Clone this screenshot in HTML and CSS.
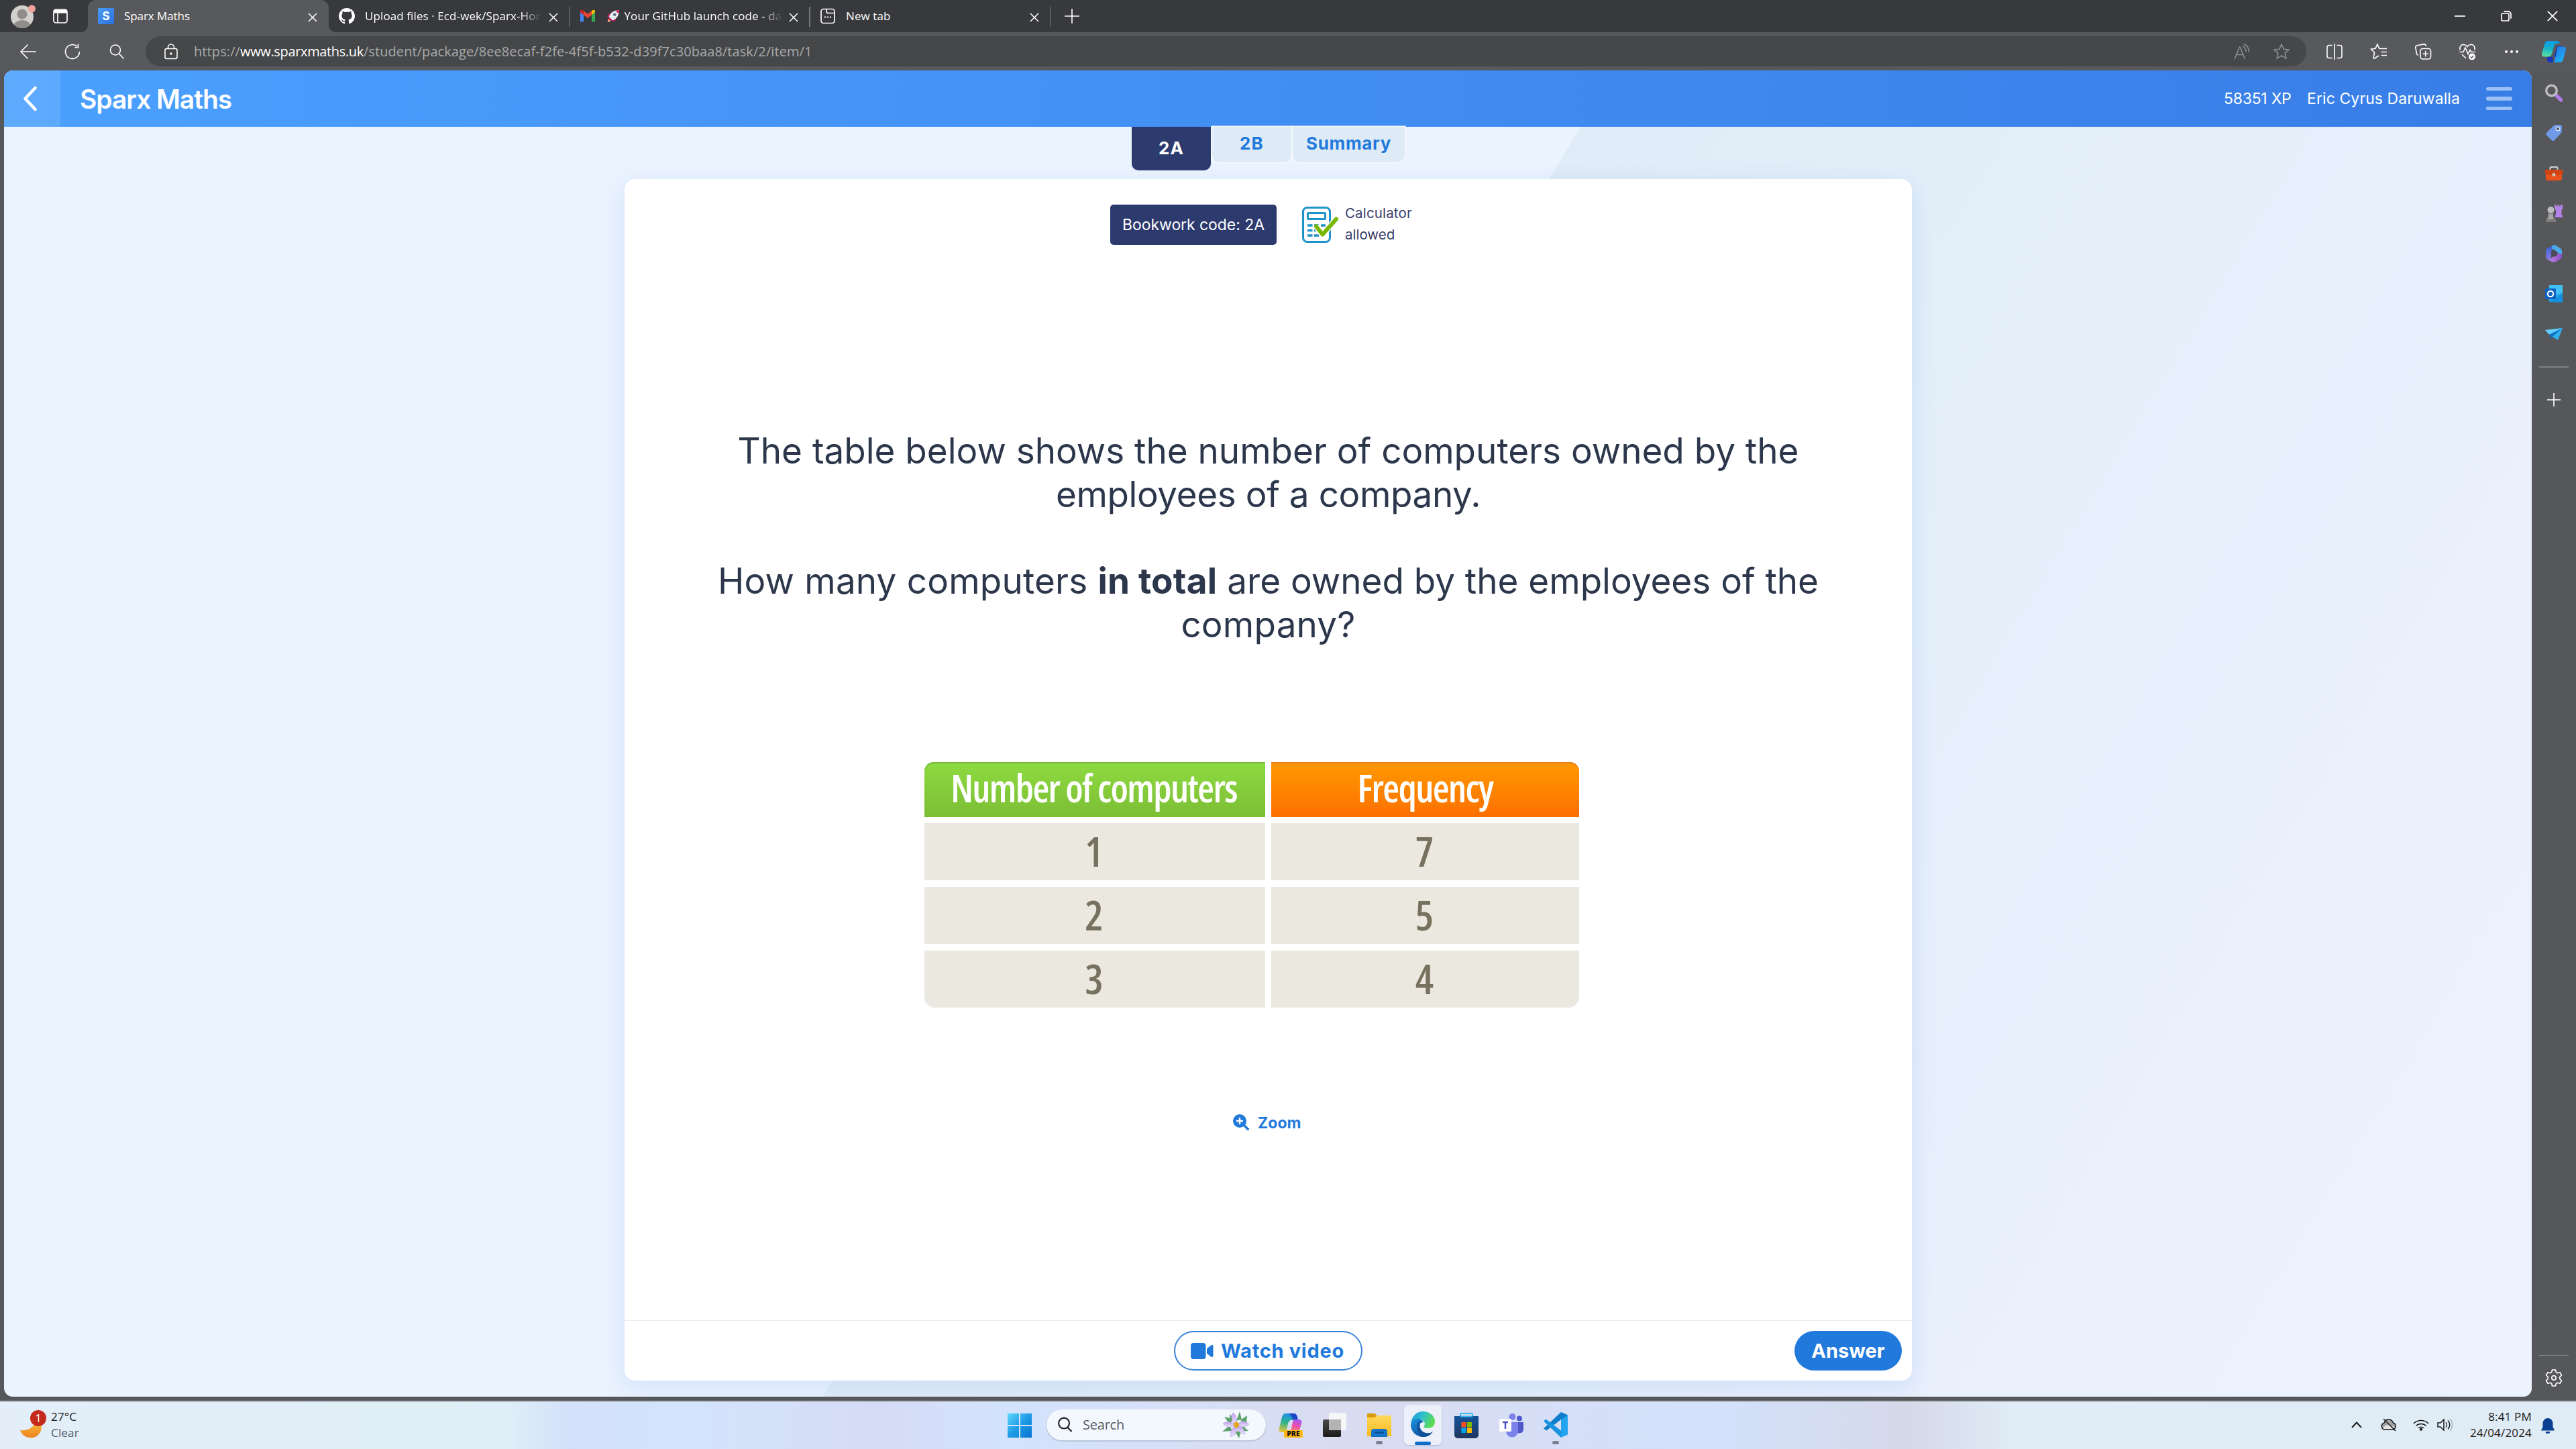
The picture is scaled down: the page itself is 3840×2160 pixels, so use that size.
FILE: index.html
```html
<!DOCTYPE html>
<html lang="en">
<head>
<meta charset="utf-8">
<title>Sparx Maths</title>
<link rel="stylesheet" href="styles.css">
</head>
<body>
<svg class="defs" width="0" height="0" aria-hidden="true">
  <defs>
    <linearGradient id="gWin" x1="0" y1="0" x2="1" y2="1"><stop offset="0" stop-color="#5fd6fb"/><stop offset=".5" stop-color="#1e9be6"/><stop offset="1" stop-color="#0673cf"/></linearGradient>
    <linearGradient id="gTeal" x1="0.6" y1="0" x2="0.4" y2="1"><stop offset="0" stop-color="#0a9be8"/><stop offset=".5" stop-color="#17b2c9"/><stop offset="1" stop-color="#57dfa4"/></linearGradient>
    <linearGradient id="gBlue" x1="0" y1="0" x2="0.6" y2="1"><stop offset="0" stop-color="#2a6fe0"/><stop offset="1" stop-color="#1cb0f5"/></linearGradient>
    <linearGradient id="gCopL" x1="0.5" y1="0" x2="0.3" y2="1"><stop offset="0" stop-color="#1c8ef0"/><stop offset=".5" stop-color="#2eb387"/><stop offset="1" stop-color="#e6c63a"/></linearGradient>
    <linearGradient id="gCopR" x1="0.6" y1="0" x2="0.3" y2="1"><stop offset="0" stop-color="#a558ee"/><stop offset=".5" stop-color="#ef4fae"/><stop offset="1" stop-color="#fb9363"/></linearGradient>
    <linearGradient id="gFolder" x1="0" y1="0" x2="0" y2="1"><stop offset="0" stop-color="#ffd95e"/><stop offset="1" stop-color="#f7b91f"/></linearGradient>
    <linearGradient id="gEdgeTop" x1="0" y1="0" x2="1" y2=".4"><stop offset="0" stop-color="#1c93d8"/><stop offset=".5" stop-color="#2cc0d0"/><stop offset="1" stop-color="#5ddc55"/></linearGradient>
    <linearGradient id="gEdgeLow" x1="0" y1="0" x2=".7" y2="1"><stop offset="0" stop-color="#1b93e0"/><stop offset="1" stop-color="#0d4f9f"/></linearGradient>
    <linearGradient id="gStore" x1="0" y1="0" x2="0" y2="1"><stop offset="0" stop-color="#14539b"/><stop offset="1" stop-color="#20375f"/></linearGradient>
    <linearGradient id="gMoon" x1="0" y1="0" x2="0" y2="1"><stop offset="0" stop-color="#fbc63e"/><stop offset="1" stop-color="#ec8222"/></linearGradient>
    <linearGradient id="gPetal" x1="0" y1="0" x2="0" y2="1"><stop offset="0" stop-color="#bda4ec"/><stop offset="1" stop-color="#ebe2fb"/></linearGradient>
    <linearGradient id="gDark" x1="0" y1="0" x2="0" y2="1"><stop offset="0" stop-color="#4a4a4a"/><stop offset="1" stop-color="#1c1c1c"/></linearGradient>
    <linearGradient id="gFav" x1="0" y1="0" x2="1" y2="1"><stop offset="0" stop-color="#4b9dfb"/><stop offset="1" stop-color="#2b6fdc"/></linearGradient>
    <linearGradient id="gM1" x1="0" y1="0" x2="0" y2="1"><stop offset="0" stop-color="#2f63cf"/><stop offset="1" stop-color="#8b7ae6"/></linearGradient>
    <linearGradient id="gM2" x1="0" y1="0" x2="1" y2="0"><stop offset="0" stop-color="#c38be8"/><stop offset="1" stop-color="#8a4cc0"/></linearGradient>
  </defs>
</svg>

<header class="tabstrip">
  <svg class="avatar" viewBox="0 0 38 38"><defs><clipPath id="cAv"><circle cx="17" cy="20" r="17"/></clipPath></defs><circle cx="17" cy="20" r="17" fill="#d3d1ce"/><g clip-path="url(#cAv)" fill="#908d8a"><circle cx="17" cy="16" r="7.5"/><ellipse cx="17" cy="35" rx="13" ry="10"/></g><circle cx="31.500" cy="8" r="5.500" fill="#f3a19b"/></svg>
  <svg class="workspaces" viewBox="0 0 22 22" fill="none" stroke="#fff" stroke-width="1.700"><rect x="1" y="1" width="20" height="20" rx="3.500"/><path d="M1.500 4.200h19" stroke-width="5"/><path d="M7 5v16"/></svg>

  <div class="tab tab-active">
    <svg class="fav" viewBox="0 0 24 24"><rect width="24" height="24" rx="1" fill="url(#gFav)"/><text x="12" y="18" text-anchor="middle" font-family="Inter, sans-serif" font-weight="700" font-size="17" fill="#fff">S</text></svg>
    <span class="tab-title t-sparx">Sparx Maths</span>
    <svg class="x" viewBox="0 0 14 14"><path d="M1 1l12 12M13 1L1 13"/></svg>
  </div>
  <div class="tab">
    <svg class="fav" viewBox="0 0 16 16"><path fill="#fff" fill-rule="evenodd" d="M8 0C3.580 0 0 3.580 0 8c0 3.540 2.290 6.530 5.470 7.590.4.070.55-.17.55-.38 0-.19-.01-.82-.01-1.490-2.010.37-2.530-.49-2.690-.94-.09-.23-.48-.94-.82-1.130-.28-.15-.68-.52-.01-.53.63-.01 1.080.58 1.230.82.72 1.210 1.870.87 2.330.66.07-.52.28-.87.51-1.070-1.780-.2-3.640-.89-3.640-3.950 0-.87.31-1.590.82-2.150-.08-.2-.36-1.020.08-2.120 0 0 .67-.21 2.200.82.64-.18 1.320-.27 2-.27s1.360.09 2 .27c1.530-1.040 2.200-.82 2.200-.82.44 1.100.16 1.920.08 2.120.51.56.82 1.270.82 2.150 0 3.070-1.870 3.750-3.650 3.950.29.25.54.73.54 1.480 0 1.070-.01 1.930-.01 2.200 0 .21.15.46.55.38A8.010 8.010 0 0 0 16 8c0-4.420-3.580-8-8-8z"/></svg>
    <span class="tab-title fade">Upload files · Ecd-wek/Sparx-Hor</span>
    <svg class="x" viewBox="0 0 14 14"><path d="M1 1l12 12M13 1L1 13"/></svg>
  </div>
  <div class="tab sep">
    <svg class="fav" viewBox="0 0 24 24"><path d="M1 20.500V5.500l5 3.700v11.300z" fill="#4285f4"/><path d="M23 20.500V5.500l-5 3.700v11.300z" fill="#34a853"/><path d="M1 6.500V5c0-2 2.300-3 3.800-1.700L12 8.800l7.200-5.500V9.500L12 15 1 6.500z" fill="#ea4335"/><path d="M18 9.900V4.200l1.200-.9C20.700 2.100 23 3 23 5v1.200z" fill="#fbbc04"/><path d="M1 6.200V5c0-1.800 1.800-2.800 3.500-1.900L6 4.200v5.700z" fill="#c5221f"/></svg>
    <svg class="rocket" viewBox="0 0 22 22"><path d="M5 11l-4 1 3-5 5-1zM11 17l-1 4 5-3 1-5z" fill="#c2185b"/><path d="M4 13c1-6 7-12 17-12 0 10-6 16-12 17z" fill="#e7edf2"/><path d="M15 2.500c2-1 4-1.500 6-1.500 0 2-.5 4-1.500 6z" fill="#d81b60"/><circle cx="13.500" cy="8.500" r="2.500" fill="#5a7184"/><path d="M5 14l3 3c-1 2-3 4-6 4 0-3 1-6 3-7z" fill="#f5a76a"/><path d="M4 12l6 6-3 1-4-4z" fill="#c2185b"/></svg>
    <span class="tab-title fade">Your GitHub launch code - da</span>
    <svg class="x" viewBox="0 0 14 14"><path d="M1 1l12 12M13 1L1 13"/></svg>
  </div>
  <div class="tab sep">
    <svg class="fav newtab" viewBox="0 0 24 24" fill="none" stroke="#fff" stroke-width="1.700"><rect x="2" y="1.500" width="20" height="21" rx="3.500"/><path d="M10 1.500v3.500a2.500 2.500 0 0 0 2.500 2.500H22"/><path d="M7 13.500h2M11 13.500h2M15 13.500h2" stroke-width="2.200"/></svg>
    <span class="tab-title">New tab</span>
    <svg class="x" viewBox="0 0 14 14"><path d="M1 1l12 12M13 1L1 13"/></svg>
  </div>
  <div class="newbtn sep"><svg viewBox="0 0 22 22" fill="none" stroke="#fff" stroke-width="1.600"><path d="M11 0v22M0 11h22"/></svg></div>
  <div class="winbtns">
    <svg viewBox="0 0 16 16"><path d="M0 8h16"/></svg>
    <svg viewBox="0 0 16 16"><rect x="1" y="4" width="11" height="11" rx="2"/><path d="M4.500 1.200h6.500a4 4 0 0 1 4 4v6.500"/></svg>
    <svg viewBox="0 0 16 16"><path d="M.8.8l14.400 14.400M15.200.8L.8 15.200"/></svg>
  </div>
</header>

<div class="toolbar">
  <nav class="navbtns">
    <svg viewBox="0 0 24 24"><path d="M24 12H1M11.500 1.500L1 12l10.500 10.500"/></svg>
    <svg viewBox="0 0 24 24"><path d="M22.500 12a10.500 10.500 0 1 1-3.300-7.600M20.500.5v5.500h-5.500"/></svg>
    <svg viewBox="0 0 24 24"><circle cx="10" cy="9.500" r="7.500"/><path d="M15.500 15l7 7.500"/></svg>
  </nav>
  <div class="omnibox">
    <svg class="lock" viewBox="0 0 20 24"><rect x="1" y="7.500" width="18" height="15" rx="2.500"/><path d="M5.500 7.500V5.500a4.500 4.500 0 0 1 9 0v2"/><circle cx="10" cy="15" r="1" fill="#fff"/></svg>
    <div class="url"><span class="u1">https://</span><b>www.sparxmaths.uk</b><span class="u3">/student/package/8ee8ecaf-f2fe-4f5f-b532-d39f7c30baa8/task/2/item/1</span></div>
    <svg class="obtn" viewBox="0 0 24 24"><path d="M1 23L8.500 5h.5l7.500 18M4 16.500h9.500M13 4a7.500 7.500 0 0 1 5 8M14.500 0.500A12 12 0 0 1 22.500 13"/></svg>
    <svg class="obtn" viewBox="0 0 24 24"><path d="M12 1.200l3.200 7.100 7.700.8-5.700 5.200 1.600 7.600L12 18l-6.800 3.900 1.600-7.600L1.100 9.100l7.700-.8z"/></svg>
  </div>
  <div class="tools">
    <div><svg viewBox="0 0 24 24"><path d="M12 0v24M8.500 2.500H4a3 3 0 0 0-3 3v13a3 3 0 0 0 3 3h4.500M15.500 2.500H20a3 3 0 0 1 3 3v13a3 3 0 0 1-3 3h-4.500"/></svg></div>
    <div><svg viewBox="0 0 24 24"><path d="M15.500 7.800L12.500 7 9.900.9 7 7.300.6 8.300l4.900 5-1.300 7.900c0 1 .8 1.300 1.600.8L12 18M15.500 7.500H24M15.500 12.500H24M15.500 17.500H24"/></svg></div>
    <div><svg viewBox="0 0 24 24"><rect x="8" y="7.500" width="15.500" height="15.500" rx="3.500"/><path d="M15.700 11v8.500M11.500 15.200H20M5 17.500a3 3 0 0 1-2.500-2.500L.8 6a3 3 0 0 1 2.400-3.300L13 .9a3 3 0 0 1 3.300 2.500V4"/></svg></div>
    <div><svg viewBox="0 0 24 24"><path d="M1 9.500C0 3.500 4 1 7 1.500c2.500.3 4 1.500 5 3 1-1.500 2.500-2.700 5-3 3-.5 7 2 6 8M.5 12.500h5.500l3-6.500 4 9.500 3-6 1.700 3H24M4 16l6 6"/><circle cx="19" cy="19.500" r="5" fill="#fff" stroke="none"/><path d="M16.700 19.500l1.700 1.700 3-3.200" stroke="#58595d"/></svg></div>
    <div><svg viewBox="0 0 24 24"><g fill="#fff" stroke="none"><circle cx="4" cy="12" r="2"/><circle cx="12" cy="12" r="2"/><circle cx="20" cy="12" r="2"/></g></svg></div>
  </div>
  <svg class="copilot" viewBox="0 0 36 32"><path d="M18 24h8l5-16h-8z" fill="#1636b8"/><path d="M10 32h10c-4 0-4-5-3-8H8c0 4 0 8 4 8z" fill="#1636c0"/><path d="M9 0h13c3 0 4 2 5 4h-5c-2 0-3 1-3.500 3L15 19c-1 3-3 4.500-6 4.500H3.500C.5 23.500-.5 21 .3 18L4 5c1-3 2-5 5-5z" fill="url(#gTeal)"/><path d="M24.500 8.500H32c3 0 4.500 2 3.700 5L32 27c-1 3-2 5-5 5H16c2 0 3-2 3.500-4L23 12c.3-1.500.5-3.500 1.500-3.500z" fill="url(#gBlue)"/></svg>
</div>

<div class="window">
  <main class="page">
    <div class="appbar">
      <a class="back"><svg viewBox="0 0 24 40"><path d="M19.500 4L4.500 20l15 16"/></svg></a>
      <span class="brand">Sparx Maths</span>
      <span class="xp">58351 XP</span>
      <span class="user">Eric Cyrus Daruwalla</span>
      <span class="burger"><i></i><i></i><i></i></span>
    </div>
    <div class="content">
      <nav class="items">
        <a class="item on">2A</a>
        <a class="item">2B</a>
        <a class="item wide">Summary</a>
      </nav>
      <section class="card">
        <div class="meta">
          <span class="bookwork">Bookwork code: 2A</span>
          <svg class="calc" viewBox="0 0 54 54" fill="none" stroke="#1f94c9"><rect x="1.500" y="1.500" width="40" height="51" rx="6" stroke-width="3"/><rect x="8.500" y="9.500" width="26" height="9" rx="1" stroke-width="3"/><path d="M8 28h7.500M18 28h7M28 28h7M8 35.500h7.500M18 35.500h5M8 43h7.500M18 43h7" stroke-width="3.600"/><path d="M21 29.500l9.500 12.500L51 18.500" stroke="#fff" stroke-width="9"/><path d="M21 29.500l9.500 12L51 18.500" stroke="#78b800" stroke-width="6" stroke-linecap="round" stroke-linejoin="round"/></svg>
          <span class="calc-label"><span>Calculator</span><span class="al">allowed</span></span>
        </div>
        <div class="question">
          <p><span>The table below shows the number of computers owned by the</span><br><span class="q2">employees of a company.</span></p>
          <p><span class="q3">How many computers <b>in total</b> <span class="q4">are owned by the employees of the</span></span><br><span class="q5">company?</span></p>
        </div>
        <div class="table">
          <div class="th green">Number of computers</div><div class="th orange">Frequency</div>
          <div class="td">1</div><div class="td">7</div>
          <div class="td">2</div><div class="td">5</div>
          <div class="td bl">3</div><div class="td br">4</div>
        </div>
        <a class="zoom"><svg viewBox="0 0 25 25"><circle cx="10" cy="10" r="10" fill="#2279dc"/><path d="M16 16l7.300 7.300" stroke="#2279dc" stroke-width="3.400"/><path d="M10 5v10M5 10h10" stroke="#fff" stroke-width="2.400"/></svg><span>Zoom</span></a>
        <footer class="actions">
          <span class="side"></span>
          <a class="watch"><svg viewBox="0 0 34 24"><rect width="22.500" height="24" rx="4" fill="#2279dc"/><path d="M24 8.500l6-5c1.500-1 3.500-.5 3.500 1.500v14c0 2-2 2.500-3.500 1.500l-6-5z" fill="#2279dc"/></svg><span>Watch video</span></a>
          <span class="side end"><a class="answer">Answer</a></span>
        </footer>
      </section>
    </div>
  </main>

  <aside class="sidebar">
    <div class="slot"><svg viewBox="0 0 26 26"><path d="M16.500 17l7 7" stroke="#b27be8" stroke-width="5.500" stroke-linecap="round"/><circle cx="9.500" cy="10" r="7.800" fill="none" stroke="#bdbdbd" stroke-width="3.400"/></svg></div>
    <div class="slot"><svg viewBox="0 0 26 26"><path d="M13.500 1.500L22 1c2 0 3 1 3 3l-.5 8.500L14 24c-1.500 1.500-3 1.500-4.500 0l-7-7c-1.500-1.500-1.500-3 0-4.500z" fill="#6f9ae8"/><circle cx="19" cy="7" r="2.800" fill="#3e4a66" stroke="#dfe8fb" stroke-width="1.400"/></svg></div>
    <div class="slot"><svg viewBox="0 0 26 26"><path d="M7.500 8V5.500a1.500 1.500 0 0 1 1.500-1.500h8a1.500 1.500 0 0 1 1.500 1.500V8" fill="none" stroke="#d0d0d0" stroke-width="2"/><path d="M1 12h24v10c0 1-1 2-2 2H3c-1 0-2-1-2-2z" fill="#e8521a"/><path d="M0 8h26v6.500c-8 2-18 2-26 0z" fill="#d24312"/><circle cx="13" cy="15.500" r="2.400" fill="#c9c9c9"/></svg></div>
    <div class="slot"><svg viewBox="0 0 26 26"><path d="M14 0h2.500v2.500h2V0h2.500v2.500h2V0H26v6l-1.500 2v7l1.500 2v2H14.500v-2L16 15V8l-2-2z" fill="#b583ea"/><circle cx="8.500" cy="8" r="5" fill="#bdbdbd"/><path d="M4 13.500h9l-1.500 2 1.500 6h2.500V26H1v-4.500h2.500l1.500-6z" fill="#a4a4a4"/><path d="M1 22h14.500v3c0 .6-.4 1-1 1H2c-.6 0-1-.4-1-1z" fill="#7d7a78"/></svg></div>
    <div class="slot"><svg viewBox="0 0 26 26"><path d="M13 0L3 5.500C1.500 6.500 1 7.500 1 9v8.500c0 2 .8 3 2 3.700l3 1.800c2-.5 3-2 3-4.500V10c0-2 1-3 2.500-4z" fill="url(#gM1)"/><path d="M13 0c-3 1.500-4 4-2 6.500L23 14.500l2 4V9c0-1.500-.5-2.500-2-3.500L15.500.8C14.600.2 14 0 13 0z" fill="#4aa9ec"/><path d="M25 14v4c0 1.300-.5 2.300-2 3.200l-7.500 4.300c-1.600.8-3.400.8-5 0L4 22c6 .5 6-4 9-5.500l6-4z" fill="url(#gM2)"/><path d="M9 9.500l4-2.500 5 3.500v5L13 18l-4-2.500z" fill="#4a4a56"/></svg></div>
    <div class="slot"><svg viewBox="0 0 26 26"><rect x="6" y="0" width="20" height="25" rx="1.500" fill="#28a8ea"/><path d="M6 0h20v12L6 15z" fill="#41c0f2"/><path d="M6 25L26 12v12c0 1-.6 2-1.600 2z" fill="#1490df"/><rect x="0" y="5" width="16" height="16" rx="1.500" fill="#0a63c4"/><circle cx="8" cy="13" r="4.200" fill="none" stroke="#fff" stroke-width="2.200"/></svg></div>
    <div class="slot"><svg viewBox="0 0 26 26"><path d="M0 7L26 4 19 22l-8-5z" fill="#2fb2ee"/><path d="M0 7L26 4 6.500 14z" fill="#64d0fb"/><path d="M6.500 13.500L26 4 11 16.500 8.500 20.500z" fill="#0f6ebf"/></svg></div>
    <hr>
    <svg class="plus" viewBox="0 0 20 20"><path d="M10 0v20M0 10h20"/></svg>
    <hr class="low">
    <svg class="gear" viewBox="0 0 26 26"><path d="M10.500 1h5l.8 3.600 2.200 1.200 3.500-1.100 2.500 4.300-2.700 2.600v2.800l2.700 2.600-2.500 4.300-3.500-1.100-2.200 1.200-.8 3.600h-5l-.8-3.600-2.200-1.200L4 21.300 1.500 17l2.700-2.600v-2.800L1.500 9 4 4.700l3.500 1.100 2.200-1.200z"/><circle cx="13" cy="13" r="3.200"/></svg>
  </aside>
</div>

<footer class="taskbar">
  <div class="weather">
    <svg viewBox="0 0 44 46"><path d="M1 31c7 1 14-1 19-6 3-3 5-7 6-11 9 6 9 18 1 25-8 6-22 4-26-8z" fill="url(#gMoon)"/><circle cx="28" cy="13" r="12" fill="#c42b1c"/><text x="28" y="18.500" text-anchor="middle" font-family="'Open Sans', sans-serif" font-size="16" font-weight="500" fill="#fff">1</text></svg>
    <div class="two"><span>27°C</span><span class="dim">Clear</span></div>
  </div>
  <div class="apps">
    <svg class="a-win" viewBox="0 0 36 36"><path d="M0 0h17v17H0zM19 0h17v17H19zM0 19h17v17H0zM19 19h17v17H19z" fill="url(#gWin)"/></svg>
    <div class="search">
      <svg class="mag" viewBox="0 0 24 24"><circle cx="10.500" cy="10" r="8.300"/><path d="M16 16.500l6.500 6.500"/></svg>
      <span>Search</span>
      <svg class="flower" viewBox="0 0 42 40"><g fill="#5fa36c"><path d="M27 0l3 12-8 2zM4 8l13 3-5 8zM38 6l-1 13-9-6zM1 30l11-9 4 8zM40 29l-12 1 3-9zM26 40l-6-10 9-1zM12 4l9 8-8 4z"/></g><g fill="url(#gPetal)" stroke="#a68ede" stroke-width=".5"><path d="M17 2c6 4 7 12 4 17-6-3-8-11-4-17z"/><path d="M41 19c-5 5-13 5-18 1 4-6 12-7 18-1z"/><path d="M35 34c-7 0-12-6-12-12 7-1 12 5 12 12z"/><path d="M14 38c-2-7 1-14 7-17 4 6 1 14-7 17z"/><path d="M2 18c6-4 14-3 18 2-5 5-13 4-18-2z"/></g><circle cx="22" cy="20" r="4.300" fill="#e2a51f"/></svg>
    </div>
    <svg class="a-cop" viewBox="0 0 36 36"><path d="M11 0h11c3 0 4 2 5 5l1 5h-9c-3 0-4 2-5 5l-2 9c-1 3-2 4-5 4H4c-3 0-4-3-3-6L5 5c1-3 3-5 6-5z" fill="url(#gCopL)"/><path d="M15 0h8c3 0 4 2 5 5l1 5h-6c-3-1-3-7-8-10z" fill="#1b45c8"/><path d="M24 9h6c4 0 5 3 4 6l-4 13H15c2-1 3-3 4-6l2-9c.6-2 1-4 3-4z" fill="url(#gCopR)"/><rect x="8" y="25" width="28" height="11" rx="2" fill="#fdb913"/><text x="22" y="34.300" text-anchor="middle" font-family="'Open Sans', sans-serif" font-weight="800" font-size="10.500" fill="#111">PRE</text></svg>
    <svg class="a-task" viewBox="0 0 35 36"><rect x="0" y="10" width="27" height="26" rx="2" fill="url(#gDark)"/><rect x="9" y="0" width="26" height="26" rx="2" fill="#f7f7f7" opacity=".92"/><path d="M9 10h18v16H9z" fill="#b4b4b4"/></svg>
    <div class="app"><svg viewBox="0 0 36 36"><path d="M0 2.500C0 1.600.6 1 1.500 1h10l3 3.500-3 4H0z" fill="#d99a0b"/><path d="M0 7h11l4-3h19.500c1 0 1.500.6 1.500 1.500V35H0z" fill="url(#gFolder)"/><path d="M6 36V28a4 4 0 0 1 4-4h16a4 4 0 0 1 4 4v8z" fill="#1273c8"/><path d="M11 29.500h14" stroke="#0a4b91" stroke-width="2"/></svg><i></i></div>
    <div class="app cur"><svg viewBox="0 0 36 38"><path d="M0 19C1 7 9 0 18 0c11 0 18 7 18 15 0 7-5 10-11 10-4 0-6-1-5.500-2.500 3-4 1-9-4-10.500C8 9.500 1 12 0 19z" fill="url(#gEdgeTop)"/><path d="M0 20c0-6 5-9.500 10-9.500 5 0 8.500 3 9 6-4-1-6 2-5.500 6 .7 6 6 10 12 10 3 0 5-.7 7.500-2.500C30 35 24.500 38 18.500 38 8 38 0 30 0 20z" fill="url(#gEdgeLow)"/><path d="M9 22c1-8 7-9 9-7-4 0-5 4-4.500 8 1 6 6 9.500 12 9.500 3 0 5-.7 7.500-2.500-4 6-9 8-14 8C12 37 8 30 9 22z" fill="#0e4d94" opacity=".75"/></svg><i></i></div>
    <svg class="a-store" viewBox="0 0 36 38"><path d="M9 7V3a2 2 0 0 1 2-2h14a2 2 0 0 1 2 2v4" fill="none" stroke="#35b6ee" stroke-width="2"/><path d="M0 5h36v28a5 5 0 0 1-5 5H5a5 5 0 0 1-5-5z" fill="url(#gStore)"/><path d="M9 5.500h18" stroke="#35b6ee" stroke-width="2"/><path d="M10.500 14h7v7.500h-7z" fill="#f25022"/><path d="M19 14h7v7.500h-7z" fill="#7fba00"/><path d="M10.500 22.500h7V30h-7z" fill="#00a4ef"/><path d="M19 22.500h7V30h-7z" fill="#ffb900"/></svg>
    <svg class="a-teams" viewBox="0 0 36 36"><circle cx="30" cy="7.500" r="4" fill="#5059c9"/><circle cx="19.500" cy="5" r="5" fill="#7b83eb"/><path d="M26 13h10v11a6 6 0 0 1-10 4z" fill="#5059c9"/><path d="M10 13h18v13a9 9 0 0 1-18 1z" fill="#7b83eb"/><rect x="0" y="8" width="18" height="19" rx="1.500" fill="#fff"/><path d="M5 13h8M9 13v10" stroke="#4b53bc" stroke-width="2.400"/></svg>
    <div class="app"><svg viewBox="0 0 36 38"><path d="M26 0l10 4.500v29L26 38z" fill="#24a4ee"/><path d="M26 0L36 4.500 4 27.500 0 24.500z" fill="#0f7fcb"/><path d="M0 13.500L3.500 10.500 26 27.500V38z" fill="#1b94e0"/><path d="M26 11v16L16 19z" fill="#d9dff3"/></svg><i></i></div>
  </div>
  <div class="tray">
    <svg class="chev" viewBox="0 0 16 10"><path d="M1 9l7-7.500L15 9"/></svg>
    <svg class="cloud" viewBox="0 0 24 20"><path d="M6 17a5 5 0 0 1-1-9.800A7 7 0 0 1 18.500 7 5.200 5.200 0 0 1 18 17z" fill="#a4a4a4" stroke="none"/><path d="M3 16c3-6 8-7 12-4l5 1 1 3-3 1H6z" fill="#e4e4e4" stroke="none"/><path d="M6 17a5 5 0 0 1-1-9.800A7 7 0 0 1 18.500 7 5.200 5.200 0 0 1 18 17zM4 1l18 18"/></svg>
    <svg class="wifi" viewBox="0 0 24 18"><path d="M.8 7a16 16 0 0 1 22.400 0M4.500 10.500a10.700 10.700 0 0 1 15 0M8 13.700a6 6 0 0 1 8 0"/><circle cx="12" cy="15.700" r="1.400" fill="#1a1a1a"/></svg>
    <svg class="spk" viewBox="0 0 24 20"><path d="M1 7h4l5-5v16l-5-5H1zM13 6.500a5 5 0 0 1 0 7M16 3.500a9 9 0 0 1 0 13"/><path d="M19 1a13 13 0 0 1 0 18" stroke="#a9b3bd"/></svg>
    <div class="two clock"><span>8:41 PM</span><span class="date">24/04/2024</span></div>
    <svg class="bell" viewBox="0 0 20 23"><path d="M10 0a7.500 7.500 0 0 1 7.500 7.500V13L20 18.500H0L2.500 13V7.500A7.500 7.500 0 0 1 10 0zM6.500 20h7a3.500 3 0 0 1-7 0z" fill="#0a3f92"/></svg>
  </div>
</footer>
</body>
</html>
```
FILE: styles.css
```css
* { box-sizing: border-box; }
body {
  margin: 0;
  width: 3840px;
  height: 2160px;
  overflow: hidden;
  display: flex;
  flex-direction: column;
  background: #56575b;
  font-family: "Open Sans", "Noto Sans", sans-serif;
}
svg { display: block; flex: none; overflow: visible; }
.defs { position: absolute; }

/* tab strip */
.tabstrip {
  height: 48px;
  flex: none;
  display: flex;
  align-items: center;
  background: #38393c;
  color: #fff;
  font-size: 17px;
}
.avatar { width: 38px; height: 38px; margin-left: 16px; }
.workspaces { width: 22px; height: 22px; margin-left: 25px; }
.tab {
  width: 358.500px;
  height: 48px;
  display: flex;
  align-items: center;
  padding: 0 17px 0 15px;
  position: relative;
}
.tab-active {
  width: 359px;
  margin-left: 30px;
  background: #58595d;
  border-radius: 12px 12px 0 0;
}
.tab-active::before, .tab-active::after {
  content: "";
  position: absolute;
  bottom: 0;
  width: 10px;
  height: 10px;
}
.tab-active::before { left: -10px; background: radial-gradient(circle at 0 0, transparent 9.500px, #58595d 10px); }
.tab-active::after { right: -10px; background: radial-gradient(circle at 100% 0, transparent 9.500px, #58595d 10px); }
.sep::before {
  content: "";
  position: absolute;
  left: -1px;
  top: 10px;
  width: 1.500px;
  height: 30px;
  background: #77787b;
}
.fav { width: 24px; height: 24px; }
.tab-title { flex: 1; margin: 0 10px 0 15px; padding-bottom: 2px; white-space: nowrap; letter-spacing: .1px; }
.t-sparx { letter-spacing: -.07px; }
.fade { margin-right: 10px; -webkit-mask-image: linear-gradient(90deg, #000 88%, transparent 100%); mask-image: linear-gradient(90deg, #000 88%, transparent 100%); }
.rocket { width: 20px; height: 22px; margin-left: 16px; }
.rocket + .tab-title { margin-left: 7px; }
.x { width: 14px; height: 14px; margin-top: 3px; fill: none; stroke: #fff; stroke-width: 1.500; }
.newbtn { position: relative; height: 48px; width: 60px; padding: 13px 0 0 21px; }
.newbtn svg { width: 22px; height: 22px; }
.winbtns { margin-left: auto; margin-right: 27px; display: flex; gap: 53px; }
.winbtns svg { width: 16px; height: 16px; fill: none; stroke: #fff; stroke-width: 1.700; }

/* toolbar */
.toolbar { height: 57px; flex: none; display: flex; align-items: center; background: #58595d; }
.navbtns { width: 217px; display: flex; gap: 42px; padding-left: 30px; }
.navbtns svg { width: 24px; height: 24px; fill: none; stroke: #fff; stroke-width: 1.600; }
.omnibox {
  width: 3221px;
  height: 45px;
  display: flex;
  align-items: center;
  background: #454749;
  border-radius: 23px;
  padding: 0 25px 0 28px;
}
.lock { width: 20px; height: 24px; fill: none; stroke: #fff; stroke-width: 1.600; }
.url { flex: 1; margin-left: 24px; font-size: 20px; color: #a9abad; white-space: nowrap; }
.url b { font-weight: 400; color: #fff; letter-spacing: -.35px; }
.u1 { letter-spacing: .1px; }
.u3 { letter-spacing: .08px; }
.obtn { width: 24px; height: 24px; fill: none; stroke: #8d8f92; stroke-width: 1.600; margin-left: 35px; }
.tools { display: flex; margin-left: 9px; }
.tools div { width: 66px; display: flex; justify-content: center; }
.tools svg { width: 24px; height: 24px; fill: none; stroke: #fff; stroke-width: 1.600; }
.copilot { width: 36px; height: 32px; margin-left: 12px; }

/* window body */
.window { height: 1985px; flex: none; display: flex; padding-left: 6px; border-bottom: 2px solid #b3bac1; }
.page {
  width: 3768px;
  height: 1977px;
  border-radius: 13px;
  overflow: hidden;
  background: #ebf3fe;
  display: flex;
  flex-direction: column;
  font-family: Inter, sans-serif;
}
.appbar {
  height: 84px;
  flex: none;
  display: flex;
  align-items: center;
  background: linear-gradient(90deg, #4ba0ff, #387de6);
  color: #fff;
  font-size: 23px;
}
.back { width: 84px; height: 84px; background: rgba(255, 255, 255, .11); display: flex; align-items: center; justify-content: center; padding-right: 6px; }
.back svg { width: 24px; height: 40px; fill: none; stroke: #fff; stroke-width: 4.600; stroke-linecap: round; stroke-linejoin: round; }
.brand { margin-left: 29px; font-size: 39px; font-weight: 600; letter-spacing: -1.100px; }
.xp { margin-left: auto; width: 124px; letter-spacing: -.26px; white-space: nowrap; }
.user { width: 267px; letter-spacing: .09px; white-space: nowrap; }
.burger { width: 39px; margin-right: 29px; display: flex; flex-direction: column; gap: 9px; }
.burger i { height: 5.300px; border-radius: 3px; background: #9dc1f5; }

.content { flex: 1; position: relative; display: flex; flex-direction: column; }
.content::before {
  content: "";
  position: absolute;
  inset: 0;
  background: linear-gradient(121deg, #deeaf5 40%, #e0ecf7 50%, #e4effa 66%, #e8effc 76%, #edf3fe 100%);
  clip-path: polygon(2350px 0, 100% 0, 100% 100%, 1221px 100%);
}
.items { position: relative; height: 78px; display: flex; align-items: flex-start; gap: 2px; padding-left: 1681px; }
.item {
  width: 118px;
  height: 53px;
  line-height: 50px;
  text-align: center;
  background: #deebf6;
  color: #2279dc;
  font-size: 26px;
  font-weight: 700;
  letter-spacing: 1.150px;
  border-radius: 0 0 10px 10px;
  box-shadow: 0 0 0 1.500px #f6faff;
}
.item.on { height: 65px; line-height: 63px; background: #2d3a6e; color: #fff; box-shadow: none; }
.item.wide { width: 167px; letter-spacing: .65px; }

.card {
  position: relative;
  margin-left: 925px;
  width: 1919px;
  height: 1791px;
  background: #fff;
  border-radius: 16px;
  box-shadow: 0 10px 36px rgba(60, 130, 220, .14);
  display: flex;
  flex-direction: column;
}
.meta { height: 98px; padding: 38px 0 0 724px; display: flex; align-items: center; color: #383e68; }
.bookwork {
  width: 248px;
  height: 60px;
  line-height: 60px;
  text-align: center;
  background: #2d3a6e;
  color: #fff;
  font-size: 23px;
  letter-spacing: -.06px;
  border-radius: 5px;
}
.calc { width: 54px; height: 54px; margin-left: 38px; }
.calc-label { margin-left: 10px; margin-top: -3px; display: flex; flex-direction: column; font-size: 20.500px; line-height: 32px; letter-spacing: .15px; }
.al { letter-spacing: 0; }

.question { margin-top: 275px; text-align: center; font-size: 53px; line-height: 64.800px; color: #2c374c; white-space: nowrap; }
.question p { margin: 0 0 64.800px; }
.q2 { letter-spacing: -.400px; }
.q3 { letter-spacing: .200px; }
.q4 { letter-spacing: 0; }
.q5 { letter-spacing: .200px; }

.table {
  margin: 107px 0 0 447px;
  display: grid;
  grid-template-columns: 508px 459px;
  grid-template-rows: 82px 85px 85px 85px;
  gap: 10px 9px;
  text-align: center;
  font-weight: 600;
  font-family: "Open Sans", "Noto Sans", sans-serif;
  font-stretch: 75%;
}
.th { font-size: 57px; line-height: 77px; letter-spacing: -1.600px; padding-right: 3px; color: #fff; }
.green { background: linear-gradient(#8edb41, #7cbd35); border-radius: 14px 0 0 0; box-shadow: inset 0 2px 1px #75b93a; }
.orange { background: linear-gradient(#ff9a00, #fc6f00); border-radius: 0 14px 0 0; box-shadow: inset 0 2px 1px #e57f1c; padding-right: 0; }
.td { background: #eae8df; color: #77725f; font-size: 61px; line-height: 84px; padding-right: 2px; position: relative; top: -1px; }
.bl { border-radius: 0 0 0 16px; }
.br { border-radius: 0 0 16px 0; }

.zoom { margin: 156px 0 0 907px; display: flex; align-items: center; gap: 12px; color: #2279dc; font-size: 23px; font-weight: 700; line-height: 30px; }
.zoom svg { width: 25px; height: 25px; }

.actions { margin-top: auto; height: 90px; border-top: 1px solid #ececee; display: flex; align-items: center; padding: 0 15px; font-size: 29px; font-weight: 700; }
.side { flex: 1; display: flex; }
.end { justify-content: flex-end; }
.watch {
  width: 281px;
  height: 59px;
  display: flex;
  align-items: center;
  padding-left: 23px;
  gap: 11px;
  border: 2px solid #3b83d8;
  border-radius: 30px;
  color: #2279dc;
  letter-spacing: .700px;
  white-space: nowrap;
}
.watch svg { width: 34px; height: 24px; }
.answer { width: 160px; height: 59px; line-height: 59px; border-radius: 30px; background: #2279dc; color: #fff; text-align: center; letter-spacing: 0; }

/* browser sidebar */
.sidebar { width: 66px; height: 1977px; display: flex; flex-direction: column; align-items: center; padding-top: 3px; }
.slot { width: 60px; height: 60px; display: flex; align-items: center; justify-content: center; }
.slot svg { width: 26px; height: 26px; }
.sidebar hr { width: 44px; height: 1.500px; margin: 18px 0 0; border: 0; background: #808184; flex: none; }
.plus { width: 20px; height: 20px; margin-top: 38px; fill: none; stroke: #fff; stroke-width: 1.600; }
.sidebar .low { margin-top: auto; }
.gear { width: 26px; height: 26px; margin: 20px 0 15px; fill: none; stroke: #fff; stroke-width: 1.600; stroke-linejoin: round; }

/* taskbar */
.taskbar {
  height: 70px;
  flex: none;
  display: flex;
  align-items: center;
  font-size: 17px;
  color: #1a1a1a;
  background: linear-gradient(90deg, #e3eef8 0, #e0eff7 750px, #d3e0fa 850px, #d3e4fc 1020px, #d6dbf5 1310px, #d3e3fd 1500px, #d9dcf1 2000px, #d3e1fb 2560px, #d5d9e9 2850px, #e0ecf6 3000px, #dfebf5 3840px);
}
.weather { width: 1502px; display: flex; align-items: center; padding-left: 29px; }
.weather svg { width: 44px; height: 46px; margin-top: -2px; }
.weather .two { margin-left: 3px; }
.two { display: flex; flex-direction: column; line-height: 24px; letter-spacing: .18px; margin-top: -3px; }
.dim { color: #535d69; }
.apps { flex: 1; display: flex; align-items: center; height: 70px; }
.a-win { width: 36px; height: 36px; margin-top: -1px; }
.search {
  width: 327px;
  height: 46px;
  margin: -3px 0 0 22px;
  display: flex;
  align-items: center;
  padding: 0 24px 0 16px;
  border-radius: 23px;
  background: #f3f7fe;
  box-shadow: 0 1px 0 1px #bcc6db;
  font-size: 20px;
  color: #5a5d63;
}
.mag { width: 23px; height: 23px; fill: none; stroke: #1f1f1f; stroke-width: 2.200; }
.search span { margin-left: 15px; letter-spacing: -.22px; flex: 1; }
.flower { width: 42px; height: 40px; }
.a-cop { width: 36px; height: 36px; margin-left: 19px; }
.a-task { width: 35px; height: 36px; margin-left: 30px; margin-top: -2px; }
.app { position: relative; width: 56px; height: 60px; display: flex; align-items: center; justify-content: center; margin-left: 10px; }
.a-task + .app { margin-left: 21px; }
.app svg { width: 36px; height: 36px; margin-bottom: 2px; }
.app i { position: absolute; left: 23px; bottom: 2px; width: 10px; height: 5px; border-radius: 3px; background: #7a8090; }
.app.cur { background: #edf0fa; border-radius: 6px; margin-top: -2px; height: 60px; margin-left: 9px; box-shadow: 0 1px 2px rgba(80, 90, 140, .3); }
.app.cur svg { height: 38px; }
.app.cur i { left: 16px; width: 24px; bottom: 0; background: #0f6fc6; }
.a-store { width: 36px; height: 38px; margin-left: 19px; }
.a-teams { width: 36px; height: 36px; margin-left: 31px; }
.a-teams + .app { margin-left: 20px; }
.a-teams + .app svg { height: 38px; }
.tray { display: flex; align-items: center; margin-right: 32px; }
.tray svg { fill: none; stroke: #1a1a1a; stroke-width: 1.500; }
.tray .chev { width: 16px; height: 10px; stroke-width: 2; margin-top: -3px; }
.cloud { width: 24px; height: 20px; margin-left: 28px; margin-top: -2px; }
.wifi { width: 24px; height: 18px; margin-left: 24px; margin-top: -3px; }
.spk { width: 24px; height: 20px; margin-left: 12px; margin-top: -2px; }
.clock { width: 117px; text-align: right; }
.tray .bell { width: 20px; height: 23px; margin-left: 14px; stroke: none; }
```
